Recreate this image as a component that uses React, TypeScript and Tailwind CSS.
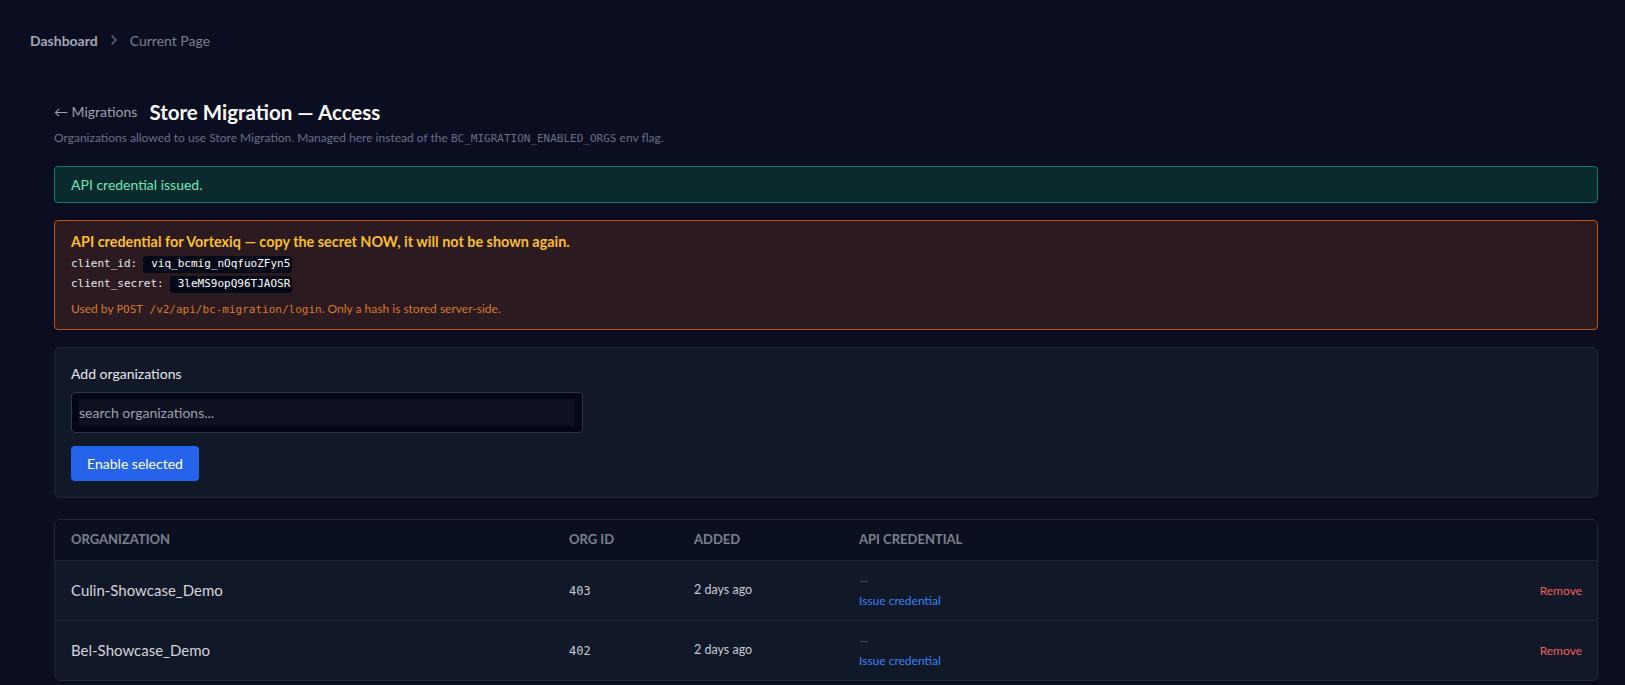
import React from "react";

const sans = "font-['Lato','Noto_Sans',sans-serif]";
const mono = "font-['DejaVu_Sans_Mono','Liberation_Mono',monospace]";

type Org = { name: string; id: number; added: string };

const orgs: Org[] = [
  { name: "Culin-Showcase_Demo", id: 403, added: "2 days ago" },
  { name: "Bel-Showcase_Demo", id: 402, added: "2 days ago" },
];

const Chip: React.FC<{ children: React.ReactNode }> = ({ children }) => (
  <span className={`${mono} inline-flex h-[17px] items-center rounded-[3px] bg-[#050816] pl-[8px] pr-[2px] text-[11px] text-white`}>
    {children}
  </span>
);

const App: React.FC = () => {
  return (
    <div className={`${sans} min-h-screen w-full bg-[#0b0e20] text-[14px]`}>
      {/* breadcrumb */}
      <nav className="box-content flex h-5 items-center pl-[30px] pt-[30px]">
        <span className="font-bold text-[#a3a7b3]">Dashboard</span>
        <svg className="mx-[8px] h-4 w-4 text-[#6b7080]" viewBox="0 0 24 24" fill="none" stroke="currentColor" strokeWidth="2" strokeLinecap="round" strokeLinejoin="round">
          <path d="m9 18 6-6-6-6" />
        </svg>
        <span className="text-[#7c808d]">Current Page</span>
      </nav>

      <main className="ml-[54px] mr-[27px] pb-6 pt-[48px]">
        <div className="flex items-center">
          <a className="text-[14px] leading-7 text-[#9ca3af]">← Migrations</a>
          <h1 className="ml-[12px] text-[20.5px] font-bold leading-7 text-white">Store Migration — Access</h1>
        </div>
        <p className="mt-[4px] text-[12px] leading-4 text-[#66708a]">
          Organizations allowed to use Store Migration. Managed here instead of the{" "}
          <span className={`${mono} text-[11px]`}>BC_MIGRATION_ENABLED_ORGS</span> env flag.
        </p>

        <div className="mt-[19px] flex h-[37px] items-center rounded-[4px] border border-[#0f7f62] bg-[#0b2a2e] px-4 text-[#6ee7b7]">
          API credential issued.
        </div>

        <div className="mt-[17px] rounded-[4px] border border-[#c2520c] bg-[#2b1b21] px-4 pb-[11px] pt-[11px]">
          <div className="text-[14.4px] font-bold leading-5 text-[#fbbf24]">
            API credential for Vortexiq — copy the secret NOW, it will not be shown again.
          </div>
          <div className="mt-[3px] flex h-[18px] items-center">
            <span className={`${mono} mr-[6px] text-[11px] text-[#e5e7eb]`}>client_id:</span>
            <Chip>viq_bcmig_nOqfuoZFyn5</Chip>
          </div>
          <div className="mt-[2px] flex h-[18px] items-center">
            <span className={`${mono} mr-[6px] text-[11px] text-[#e5e7eb]`}>client_secret:</span>
            <Chip>3leMS9opQ96TJAOSR</Chip>
          </div>
          <div className="mt-2 text-[12px] leading-4 text-[#d9782a]">
            Used by <span className={`${mono} text-[11px]`}>POST /v2/api/bc-migration/login</span>. Only a hash is stored server-side.
          </div>
        </div>

        <section className="mt-[17px] rounded-md border border-[#1f2738] bg-[#111827] px-4 pb-4 pt-4">
          <div className="leading-5 text-[#e5e7eb]">Add organizations</div>
          <div className="mt-2 w-[512px] rounded-[4px] border border-[#2d3546] bg-[#030614] px-[7px] py-[6px]">
            <input
              className="h-[27px] w-full bg-[#0f1120] px-0 text-[14px] text-white outline-none placeholder:text-[#9aa1ad]"
              placeholder="search organizations..."
            />
          </div>
          <button className="mt-[13px] h-[35px] w-[128px] rounded-[4px] bg-[#2563eb] text-[14px] text-white">
            Enable selected
          </button>
        </section>

        <section className="mt-[21px] overflow-hidden rounded-md border border-[#1f2738] bg-[#111827]">
          <div className="grid h-10 grid-cols-[498px_125px_165px_1fr_auto] items-center bg-[#0b1021] text-[13px] font-bold uppercase text-[#7a808e]">
            <div className="pl-4">Organization</div>
            <div className="pl-4">Org ID</div>
            <div className="pl-4">Added</div>
            <div className="pl-4">API credential</div>
            <div className="pr-4" />
          </div>
          {orgs.map((o) => (
            <div
              key={o.id}
              className="grid h-[60px] grid-cols-[498px_125px_165px_1fr_auto] items-center border-t border-[#1f2738]"
            >
              <div className="pl-4 text-[15px] text-[#d1d5db]">{o.name}</div>
              <div className={`${mono} pl-4 text-[12px] text-[#c7cbd3]`}>{o.id}</div>
              <div className="pl-4 text-[12.5px] text-[#c7cbd3]">{o.added}</div>
              <div className="flex flex-col pl-4">
                <span className="text-[12px] leading-4 text-[#4b5363]">—</span>
                <a className="mt-1 text-[12px] leading-4 text-[#3b82f6]">Issue credential</a>
              </div>
              <div className="pr-[15px] text-[12px] text-[#f06060]">Remove</div>
            </div>
          ))}
        </section>
      </main>
    </div>
  );
};

export default App;
